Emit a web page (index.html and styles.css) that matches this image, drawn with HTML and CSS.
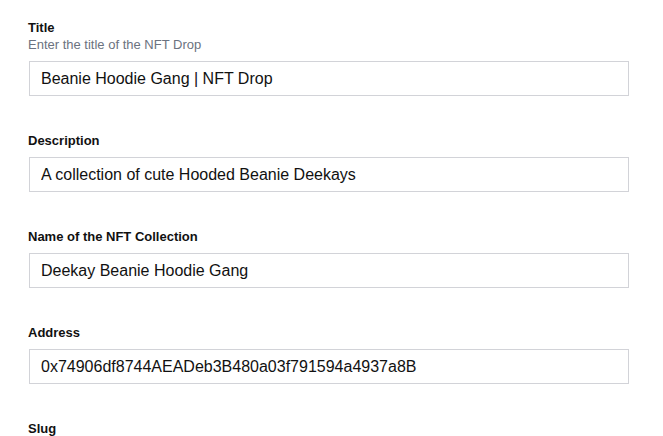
FILE: index.html
```html
<!DOCTYPE html>
<html>
<head>
<meta charset="utf-8">
<link rel="stylesheet" href="styles.css">
</head>
<body>
<form class="form">
  <div class="field">
    <label class="label">Title</label>
    <p class="hint">Enter the title of the NFT Drop</p>
    <input class="input" type="text" value="Beanie Hoodie Gang | NFT Drop">
  </div>
  <div class="field">
    <label class="label">Description</label>
    <input class="input" type="text" value="A collection of cute Hooded Beanie Deekays">
  </div>
  <div class="field">
    <label class="label">Name of the NFT Collection</label>
    <input class="input" type="text" value="Deekay Beanie Hoodie Gang">
  </div>
  <div class="field">
    <label class="label">Address</label>
    <input class="input" type="text" value="0x74906df8744AEADeb3B480a03f791594a4937a8B">
  </div>
  <div class="field">
    <label class="label">Slug</label>
    <input class="input" type="text" value="">
  </div>
</form>
</body>
</html>
```
FILE: styles.css
```css
html, body {
  margin: 0;
  padding: 0;
  background: #ffffff;
  font-family: "Liberation Sans", Arial, sans-serif;
  overflow: hidden;
}
.form {
  display: flex;
  flex-direction: column;
  gap: 36px;
  padding: 19px 0 0 28px;
}
.field {
  display: flex;
  flex-direction: column;
}
.label {
  display: block;
  font-size: 13px;
  line-height: 17px;
  font-weight: bold;
  color: #111111;
}
.hint {
  margin: 0;
  font-size: 13px;
  line-height: 17px;
  color: #6b7280;
}
.input {
  box-sizing: border-box;
  margin: 8px 0 0 1px;
  width: 600px;
  height: 35px;
  padding: 0 11px;
  border: 1px solid #d2d3d8;
  border-radius: 0;
  font-family: "Liberation Sans", Arial, sans-serif;
  font-size: 16px;
  color: #111111;
  background: #ffffff;
  outline: none;
}
```
